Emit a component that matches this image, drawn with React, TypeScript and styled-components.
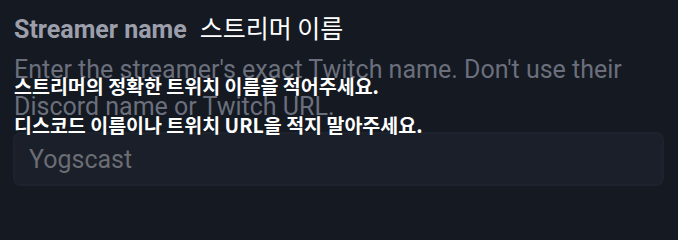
import styled, { createGlobalStyle } from 'styled-components';

const GlobalStyle = createGlobalStyle`
  html, body {
    margin: 0;
    padding: 0;
    background-color: #141922;
  }
  * {
    box-sizing: border-box;
  }
`;

const Wrapper = styled.div`
  width: 678px;
  height: 205px;
  padding: 7px 14px 0px 14px;
  display: flex;
  flex-direction: column;
  overflow: hidden;
  font-family: Roboto, 'Liberation Sans', sans-serif;
`;

const TitleRow = styled.div`
  display: flex;
  align-items: baseline;
  gap: 13px;
  height: 40px;
`;

const Title = styled.span`
  font-size: 25px;
  font-weight: bold;
  color: #9c9fab;
  line-height: 40px;
`;

const KoreanTitle = styled.span`
  font-family: 'Noto Sans CJK KR', sans-serif;
  font-size: 25px;
  color: #ffffff;
  line-height: 40px;
`;

const DescriptionWrapper = styled.div`
  position: relative;
  margin-top: 4px;
`;

const Description = styled.p`
  margin: 0px;
  font-size: 25px;
  line-height: 37px;
  color: #6b6f7c;
`;

const Overlay = styled.span<{ top: number }>`
  position: absolute;
  left: 0px;
  top: ${(props) => `${props.top}px`};
  font-family: 'Noto Sans CJK KR', sans-serif;
  font-size: 19.5px;
  font-weight: 700;
  line-height: 24px;
  color: #ffffff;
  white-space: nowrap;
`;

const Input = styled.input`
  margin: 7px 0px 0px -1px;
  width: 651px;
  height: 54px;
  padding: 0px 14px;
  border: 2px solid #1d232e;
  border-radius: 8px;
  background-color: #1a1f29;
  font-family: Roboto, 'Liberation Sans', sans-serif;
  font-size: 25px;
  color: #d0d3da;
  outline: none;

  &::placeholder {
    color: #6a6d73;
  }
`;

const App = () => {
  return (
    <>
      <GlobalStyle />
      <Wrapper>
        <TitleRow>
          <Title>{'Streamer name'}</Title>
          <KoreanTitle>{'스트리머 이름'}</KoreanTitle>
        </TitleRow>
        <DescriptionWrapper>
          <Description>
            {
              "Enter the streamer's exact Twitch name. Don't use their Discord name or Twitch URL."
            }
          </Description>
          <Overlay top={23}>{'스트리머의 정확한 트위치 이름을 적어주세요.'}</Overlay>
          <Overlay top={62}>
            {'디스코드 이름이나 트위치 URL을 적지 말아주세요.'}
          </Overlay>
        </DescriptionWrapper>
        <Input placeholder="Yogscast" />
      </Wrapper>
    </>
  );
};

export default App;
